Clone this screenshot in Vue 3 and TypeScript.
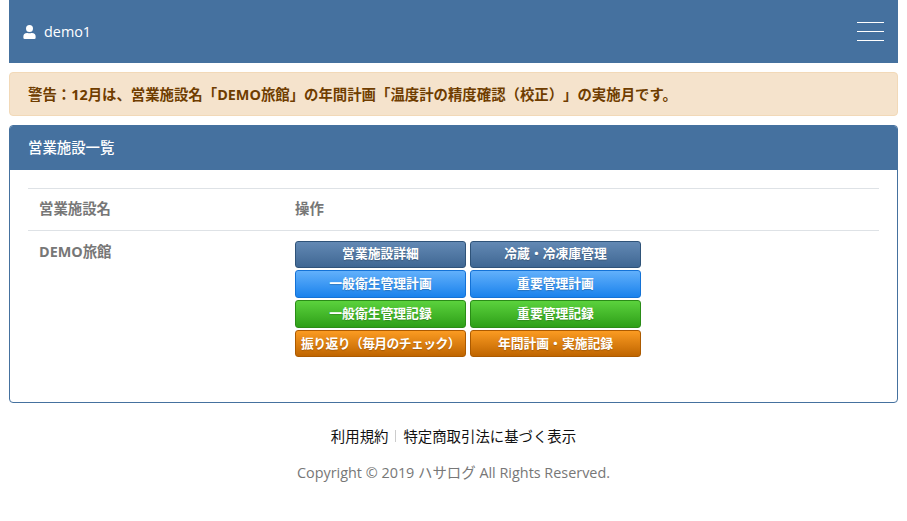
<script setup lang="ts">
interface Btn { label: string; tone: string; fit?: boolean }
const buttons: Btn[] = [
  { label: '営業施設詳細', tone: 'navy' },
  { label: '冷蔵・冷凍庫管理', tone: 'navy' },
  { label: '一般衛生管理計画', tone: 'blue' },
  { label: '重要管理計画', tone: 'blue' },
  { label: '一般衛生管理記録', tone: 'green' },
  { label: '重要管理記録', tone: 'green' },
  { label: '振り返り（毎月のチェック）', tone: 'orange', fit: true },
  { label: '年間計画・実施記録', tone: 'orange' },
]
</script>

<template>
  <div class="page">
    <header class="topbar">
      <div class="user">
        <svg class="user-icon" viewBox="0 0 448 512" aria-hidden="true">
          <path fill="#fff" d="M224 256a128 128 0 1 0 0-256 128 128 0 1 0 0 256zm89.600 32h-16.700a174.100 174.100 0 0 1-145.800 0h-16.700A134.400 134.400 0 0 0 0 422.400V464a48 48 0 0 0 48 48h352a48 48 0 0 0 48-48v-41.600A134.400 134.400 0 0 0 313.600 288z" />
        </svg>
        <span>demo1</span>
      </div>
      <div class="burger"><i></i><i></i><i></i></div>
    </header>

    <div class="alert"><span>警告：12月は、営業施設名「DEMO旅館」の年間計画「温度計の精度確認（校正）」の実施月です。</span></div>

    <section class="card">
      <h2 class="card-head"><span>営業施設一覧</span></h2>
      <div class="card-body">
        <div class="row head">
          <div class="col-name"><span>営業施設名</span></div>
          <div class="col-ops"><span>操作</span></div>
        </div>
        <div class="row body">
          <div class="col-name">DEMO旅館</div>
          <div class="col-ops">
            <div class="btn-grid">
              <a v-for="b in buttons" :key="b.label" class="btn" :class="[b.tone, { fit: b.fit }]"><span>{{ b.label }}</span></a>
            </div>
          </div>
        </div>
      </div>
    </section>

    <footer class="foot">
      <div class="links"><a>利用規約</a><span class="sep"></span><a>特定商取引法に基づく表示</a></div>
      <p class="copy">Copyright © 2019 ハサログ All Rights Reserved.</p>
    </footer>
  </div>
</template>

<style>
html, body { margin: 0; background: #fff; }
</style>

<style scoped>
.page {
  height: 521px;
  overflow: hidden;
  padding: 0 9px;
  box-sizing: border-box;
  font-family: "Open Sans", "Noto Sans CJK JP", sans-serif;
  font-size: 14.4px;
  color: #777;
  text-spacing-trim: space-all;
}
.topbar {
  height: 63px;
  background: #45719f;
  display: flex;
  align-items: center;
  justify-content: space-between;
  padding: 0 14px;
  color: #fff;
}
.user { display: flex; align-items: center; gap: 8px; }
.user-icon { width: 13px; height: 14px; }
.burger { display: flex; flex-direction: column; gap: 8px; }
.burger i { display: block; width: 27px; height: 1px; background: #fff; }
.alert {
  margin-top: 9px;
  height: 44px;
  box-sizing: border-box;
  padding: 0 18px 2px;
  display: flex;
  align-items: center;
  background: #f5e3cc;
  border: 1px solid #f2d9b8;
  border-radius: 4px;
  color: #6f3d00;
  font-weight: 700;
}
.card {
  margin-top: 9px;
  height: 278px;
  box-sizing: border-box;
  border: 1px solid #45719f;
  border-radius: 4px;
  overflow: hidden;
}
.card-head {
  margin: 0;
  height: 44px;
  padding: 0 18px 3px;
  box-sizing: border-box;
  display: flex;
  align-items: center;
  background: #45719f;
  color: #fff;
  font-size: 14.4px;
  font-weight: 500;
}
.card-body { padding: 18px 18px 0; }
.row { display: flex; border-top: 1px solid #dee2e6; font-weight: 700; }
.row.head { height: 42px; align-items: center; padding-bottom: 4px; box-sizing: border-box; }
.row.body { padding-top: 9.6px; }
.row.body .col-name { line-height: 21px; }
.col-name { width: 267px; padding-left: 11px; box-sizing: border-box; flex: none; }
.btn-grid {
  display: grid;
  grid-template-columns: 171px 171px;
  column-gap: 4px;
  row-gap: 2px;
  grid-auto-rows: 27.7px;
}
.btn {
  display: flex;
  align-items: center;
  justify-content: center;
  box-sizing: border-box;
  border: 1px solid;
  border-radius: 3px;
  padding-bottom: 3px;
  color: #fff;
  font-size: 12.8px;
  font-weight: 700;
  white-space: nowrap;
  text-shadow: 0 1px 1px rgba(0, 0, 0, .2);
}
.fit { letter-spacing: -0.55px; }
.navy { background: linear-gradient(#6389b4, #3f6793); border-color: #2f5379; }
.blue { background: linear-gradient(#62b0fb, #1a82ec); border-color: #1472d6; }
.green { background: linear-gradient(#5bd23d, #2e9f18); border-color: #2a8c17; }
.orange { background: linear-gradient(#fb9b22, #bf6500); border-color: #ac5a00; }
.foot { text-align: center; margin-top: 23px; }
.links {
  display: flex;
  justify-content: center;
  align-items: center;
  color: #111;
  height: 19px;
}
.sep { width: 1px; height: 12px; background: #ccc; margin: 0 7px; }
.copy { margin: 18px 0 0; line-height: 19px; color: #777; }
</style>
